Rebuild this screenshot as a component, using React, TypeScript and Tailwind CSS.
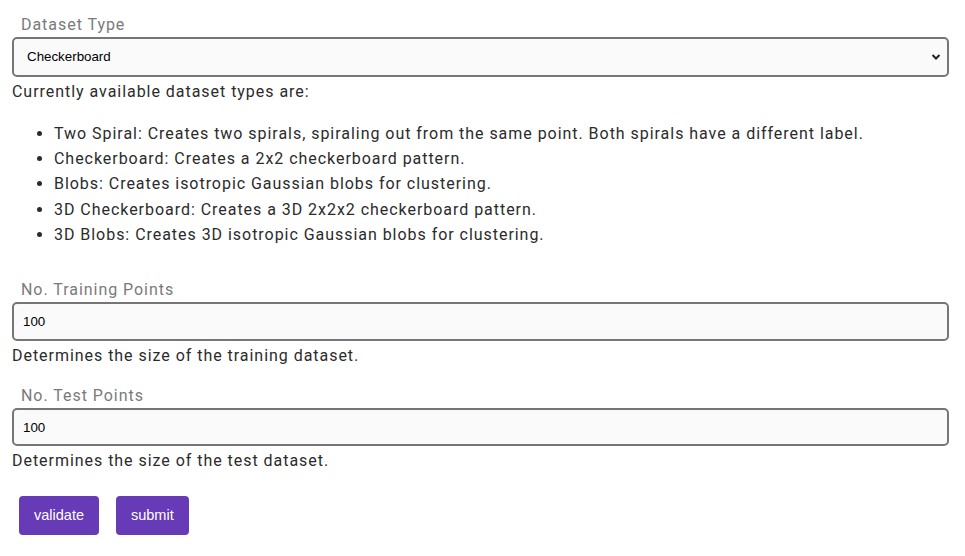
import { useState } from "react";

const datasetTypes = [
  "Two Spiral: Creates two spirals, spiraling out from the same point. Both spirals have a different label.",
  "Checkerboard: Creates a 2x2 checkerboard pattern.",
  "Blobs: Creates isotropic Gaussian blobs for clustering.",
  "3D Checkerboard: Creates a 3D 2x2x2 checkerboard pattern.",
  "3D Blobs: Creates 3D isotropic Gaussian blobs for clustering.",
];

const Field = ({ label, children }: { label: string; children: React.ReactNode }) => (
  <div className="flex flex-col">
    <label className="pl-[9px] pb-[2px] text-[16px] leading-[20px] tracking-[0.06em] text-[#7a7a7a]">
      {label}
    </label>
    {children}
  </div>
);

const inputClass =
  "w-full rounded-[5px] border-2 border-[#767676] bg-[#fafafa] text-[13.33px] tracking-normal text-black outline-none font-['Liberation_Sans',Arial,sans-serif]";

const buttonClass =
  "h-[39px] rounded-[4px] bg-[#673ab7] px-[15px] text-[14.5px] tracking-normal text-white font-['Liberation_Sans',Arial,sans-serif]";

const App = () => {
  const [type, setType] = useState("Checkerboard");
  const [train, setTrain] = useState("100");
  const [test, setTest] = useState("100");

  return (
    <div className="bg-white pl-[12px] pr-[16px] pt-[15px] pb-4 w-[965px] h-[556px] font-['Roboto',sans-serif] text-[16px] tracking-[0.06em] text-[#2b2b2b]">
      <Field label="Dataset Type">
        <div className="relative">
          <select
            value={type}
            onChange={(e) => setType(e.target.value)}
            className={`${inputClass} h-[40px] appearance-none pl-[13px]`}
          >
            <option>Two Spiral</option>
            <option>Checkerboard</option>
            <option>Blobs</option>
            <option>3D Checkerboard</option>
            <option>3D Blobs</option>
          </select>
          <svg
            className="pointer-events-none absolute right-[8px] top-[16px]"
            width="10"
            height="8"
            viewBox="0 0 10 8"
          >
            <path d="M1.5 2 L5 5.5 L8.5 2" stroke="#222" strokeWidth="2" fill="none" />
          </svg>
        </div>
      </Field>
      <p className="mt-[4px] leading-[22px]">Currently available dataset types are:</p>
      <ul className="mt-[18px] mb-[33px] list-disc pl-[42px] leading-[25.2px]">
        {datasetTypes.map((t, i) => (
          <li key={t + i}>{t}</li>
        ))}
      </ul>

      <Field label="No. Training Points">
        <input
          value={train}
          onChange={(e) => setTrain(e.target.value)}
          className={`${inputClass} h-[39px] px-[9px]`}
        />
      </Field>
      <p className="mt-[4px] leading-[22px]">Determines the size of the training dataset.</p>

      <div className="mt-[19px]">
        <Field label="No. Test Points">
          <input
            value={test}
            onChange={(e) => setTest(e.target.value)}
            className={`${inputClass} h-[38px] px-[9px]`}
          />
        </Field>
      </div>
      <p className="mt-[4px] leading-[22px]">Determines the size of the test dataset.</p>

      <div className="mt-[24px] flex gap-[17px] pl-[7px]">
        <button className={buttonClass}>validate</button>
        <button className={buttonClass}>submit</button>
      </div>
    </div>
  );
};

export default App;
